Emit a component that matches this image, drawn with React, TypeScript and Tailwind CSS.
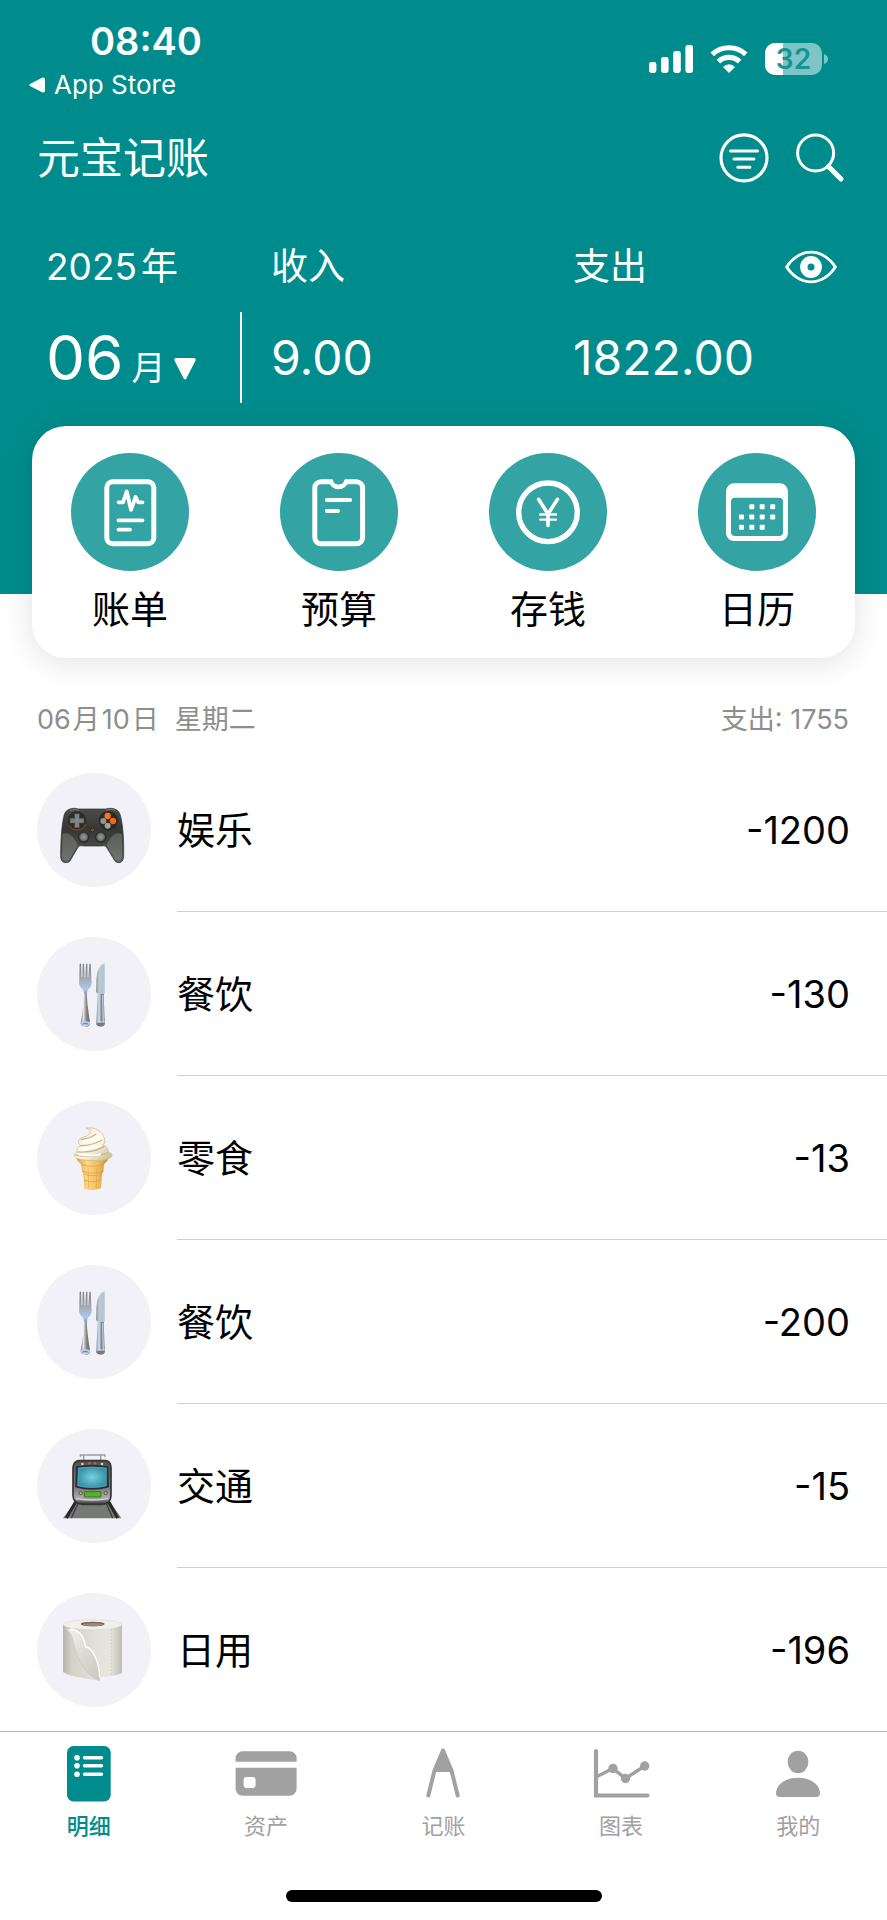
import type { ReactNode } from "react";

/* ---------- status bar ---------- */

function StatusIcons() {
  return (
    <div className="flex items-center">
      <svg width="44" height="28" viewBox="0 0 44 28" fill="#fff" aria-hidden="true">
        <rect x="0" y="17" width="7.4" height="11" rx="2.4" />
        <rect x="12" y="12" width="7.6" height="16" rx="2.4" />
        <rect x="24.2" y="6" width="7.6" height="22" rx="2.4" />
        <rect x="36.4" y="0" width="7.6" height="28" rx="2.4" />
      </svg>
      <svg className="ml-[17px]" width="38" height="28" viewBox="0 0 38 28" aria-hidden="true">
        <g fill="none" stroke="#fff" strokeWidth="5.2">
          <path d="M2.2 9.4 A24.5 24.5 0 0 1 35.8 9.4" />
          <path d="M8.4 16.6 A15.5 15.5 0 0 1 29.6 16.6" />
        </g>
        <path d="M19 28 L12.9 21.9 Q19 16.8 25.1 21.9 Z" fill="#fff" />
      </svg>
      <div className="relative ml-[17px] flex h-8 w-[57px] items-center justify-center overflow-hidden rounded-[10px] bg-[#80c5c5]">
        <span className="absolute inset-y-0 left-0 w-[18px] bg-white" />
        <span className="relative text-[28px] leading-8 font-semibold text-[#169393]">32</span>
      </div>
      <svg className="ml-[2px]" width="4" height="10" viewBox="0 0 4 10" aria-hidden="true">
        <path d="M0 0 Q4 1.5 4 5 T0 10 Z" fill="#80c5c5" />
      </svg>
    </div>
  );
}

/* ---------- header icons ---------- */

const FilterIcon = () => (
  <svg width="50" height="50" viewBox="0 0 50 50" fill="none" stroke="#fff" strokeLinecap="round" aria-hidden="true">
    <circle cx="25" cy="24.800" r="23" strokeWidth="3.2" />
    <path d="M11.5 18H38.500M15 26H35M18.800 34.300H31" strokeWidth="3" />
  </svg>
);

const SearchIcon = () => (
  <svg width="50" height="50" viewBox="0 0 50 50" fill="none" stroke="#fff" strokeLinecap="round" aria-hidden="true">
    <circle cx="20.6" cy="20" r="18" strokeWidth="3" />
    <path d="M33.5 33.5L46 46" strokeWidth="5" />
  </svg>
);

const EyeIcon = () => (
  <svg width="60" height="40" viewBox="0 0 60 40" fill="none" stroke="#fff" aria-hidden="true">
    <path
      d="M5.6 20C11 11.5 20 5.2 30 5.2S49 11.5 54.4 20C49 28.500 40 34.8 30 34.8S11 28.500 5.600 20Z"
      strokeWidth="2.8"
      strokeLinejoin="round"
    />
    <circle cx="30" cy="20" r="7.2" strokeWidth="7.4" />
  </svg>
);

/* ---------- shortcut icons ---------- */

const shortcuts: { label: string; icon: ReactNode }[] = [
  {
    label: "账单",
    icon: (
      <g fill="none" stroke="#fff" strokeLinecap="round" strokeLinejoin="round">
        <rect x="35.800" y="28.8" width="47" height="62" rx="6" strokeWidth="5" />
        <path d="M47.500 49.3H52L55.700 38.500L60 56.800L64.500 44L67.300 49.3H71.500" strokeWidth="3.8" />
        <path d="M47.500 67.300H71.500M47.500 76.700H59" strokeWidth="3.8" />
      </g>
    ),
  },
  {
    label: "预算",
    icon: (
      <g fill="none" stroke="#fff" strokeLinejoin="round">
        <path
          d="M52.600 28.800H41A6.200 6.200 0 0 0 34.800 35V84.600A6.200 6.200 0 0 0 41 90.800H76.400A6.200 6.200 0 0 0 82.600 84.600V35A6.200 6.200 0 0 0 76.400 28.800H64.600"
          strokeWidth="5"
        />
        <path d="M50.600 27.500A8.200 8.200 0 0 0 66.600 27.500" strokeWidth="4.600" />
        <path d="M46.800 47H70.200M46.800 58H58" strokeWidth="3.800" strokeLinecap="round" />
      </g>
    ),
  },
  {
    label: "存钱",
    icon: (
      <g fill="none" stroke="#fff" strokeLinecap="round" strokeLinejoin="round">
        <circle cx="59" cy="59.300" r="29.300" strokeWidth="5.400" />
        <path d="M49.600 46.300L59 61L68.500 46.300M59 61V72.500" strokeWidth="3.600" />
        <path d="M51.300 61.500H67M51.300 66.600H67" strokeWidth="2.400" />
      </g>
    ),
  },
  {
    label: "日历",
    icon: (
      <g fill="#fff">
        <path
          fillRule="evenodd"
          d="M36 30.300H82A8 8 0 0 1 90 38.300V80A8 8 0 0 1 82 88H36A8 8 0 0 1 28 80V38.300A8 8 0 0 1 36 30.300ZM37 44.700A4 4 0 0 0 33 48.700V79A4 4 0 0 0 37 83H81A4 4 0 0 0 85 79V48.700A4 4 0 0 0 81 44.700Z"
        />
        {[
          [53.800, 53.700], [64.200, 53.700], [74.700, 53.700],
          [43.500, 64], [53.800, 64], [64.200, 64], [74.700, 64],
          [43.500, 74.200], [53.800, 74.200], [64.200, 74.200],
        ].map(([x, y]) => (
          <rect key={`${x}-${y}`} x={x - 2.500} y={y - 2.500} width="5" height="5" rx="0.800" />
        ))}
      </g>
    ),
  },
];

/* ---------- category pictures ---------- */

function Picture({ children }: { children: ReactNode }) {
  return (
    <svg className="size-full" viewBox="0 0 342 342" aria-hidden="true">
      {children}
    </svg>
  );
}

const GamepadPicture = () => (
  <Picture>
    <defs>
      <linearGradient id="pad" x1="0" y1="0" x2="0" y2="1">
        <stop offset="0" stopColor="#4a4c4a" />
        <stop offset="0.400" stopColor="#353735" />
        <stop offset="1" stopColor="#5b5d5a" />
      </linearGradient>
      <linearGradient id="grip" x1="0" y1="0" x2="0" y2="1">
        <stop offset="0" stopColor="#5c5e5b" />
        <stop offset="1" stopColor="#70736f" />
      </linearGradient>
      <radialGradient id="stick">
        <stop offset="0" stopColor="#999c9a" />
        <stop offset="0.650" stopColor="#777a78" />
        <stop offset="1" stopColor="#414341" />
      </radialGradient>
    </defs>
    <path
      d="M84 119C94 105 112 104 124 108H206C220 104 238 105 247 119C256 138 261 190 260 245C260 263 254 269 245 269C236 269 233 264 229 256L208 222C203 216 198 219 191 219H141C133 219 128 216 123 223L103 257C99 266 95 269 87 269C77 269 71 263 71 248C71 190 76 138 84 119Z"
      fill="url(#pad)"
      stroke="#292b29"
      strokeWidth="2"
    />
    <path d="M76 185C86 175 105 185 113 200C121 211 124 216 119 223L98 257C94 265 78 266 76 252Z" fill="url(#grip)" />
    <path d="M255 185C245 175 226 185 218 200C210 211 207 216 212 223L233 257C238 265 253 266 255 252Z" fill="url(#grip)" />
    <path d="M99 112Q115 107 125 112M207 112Q225 106 235 113" fill="none" stroke="#7b7e7b" strokeWidth="3" />
    <circle cx="120" cy="143" r="28" fill="#2b2d2b" />
    <path d="M98 158A26 26 0 0 0 145 154" fill="none" stroke="#a64520" strokeWidth="3" />
    <path d="M113 122H127V136H141V150H127V164H113V150H99V136H113Z" fill="#7c807d" stroke="#454846" strokeWidth="1.500" />
    <path d="M114 123L120 142L126 123M100 149L120 143L140 149M114 163L120 144L126 163" fill="none" stroke="#8d918f" strokeWidth="1.500" />
    <circle cx="214" cy="143" r="29" fill="#292a29" />
    <circle cx="212" cy="129" r="9.500" fill="#ff7418" />
    <circle cx="228" cy="144" r="9.500" fill="#ff650e" />
    <circle cx="199" cy="144" r="9" fill="#929492" />
    <circle cx="212" cy="158" r="9" fill="#a0a2a0" />
    <circle cx="166" cy="171" r="7" fill="#20211f" />
    <circle cx="166" cy="171" r="4" fill="#873916" stroke="#df611e" strokeWidth="1.500" />
    <circle cx="140" cy="193" r="17" fill="#292b29" />
    <circle cx="140" cy="192" r="14" fill="url(#stick)" />
    <circle cx="191" cy="193" r="17" fill="#292b29" />
    <circle cx="191" cy="192" r="14" fill="url(#stick)" />
  </Picture>
);

const CutleryPicture = () => (
  <Picture>
    <defs>
      <linearGradient id="handle" x1="0" y1="0" x2="1" y2="0">
        <stop offset="0" stopColor="#777981" />
        <stop offset="0.300" stopColor="#e3e5eb" />
        <stop offset="0.600" stopColor="#8c8988" />
        <stop offset="1" stopColor="#5f5d60" />
      </linearGradient>
      <linearGradient id="blade" x1="0" y1="0" x2="1" y2="0">
        <stop offset="0" stopColor="#8e9da6" />
        <stop offset="0.400" stopColor="#becbd3" />
        <stop offset="1" stopColor="#a8bdc9" />
      </linearGradient>
      <linearGradient id="tines" x1="0" y1="0" x2="0" y2="1">
        <stop offset="0" stopColor="#77777b" />
        <stop offset="0.550" stopColor="#aab0ba" />
        <stop offset="0.800" stopColor="#a7c8ef" />
        <stop offset="1" stopColor="#8597af" />
      </linearGradient>
    </defs>
    <path
      d="M128 82Q130 77 132 82L134 121H136L137 82Q139 77 141 82L143 121H145L147 82Q149 77 151 82L152 121H154L157 82Q159 77 161 82L164 137Q163 151 152 158L149 174H142L139 158Q127 151 126 137Z"
      fill="url(#tines)"
    />
    <path d="M142 168H149Q151 208 159 257Q160 269 145 269Q130 269 131 257Q140 210 142 168Z" fill="url(#handle)" />
    <path d="M131 255Q145 250 159 255Q159 268 145 268Q131 268 131 255Z" fill="#b5d2f1" />
    <path d="M137 261Q145 258 153 261" fill="none" stroke="#68717d" strokeWidth="3" />
    <path d="M203 79Q180 85 178 127L177 166Q184 176 203 170L204 91Z" fill="url(#blade)" />
    <path d="M202 81L201 168" stroke="#d6e1e8" strokeWidth="2" />
    <path d="M182 171H200L203 260Q201 269 190 269Q178 269 178 259Z" fill="url(#handle)" />
    <path d="M186 174L184 255M197 174L199 256" stroke="#b8d1ed" strokeWidth="4" />
    <path d="M179 256H203L202 265Q190 272 179 265Z" fill="#7d7979" />
    <path d="M179 255H203" stroke="#d4e2f1" strokeWidth="3" />
  </Picture>
);

const IceCreamPicture = () => (
  <Picture>
    <defs>
      <linearGradient id="cone" x1="0" y1="0" x2="1" y2="0">
        <stop offset="0" stopColor="#d99b3d" />
        <stop offset="0.350" stopColor="#ffd783" />
        <stop offset="0.700" stopColor="#eeb956" />
        <stop offset="1" stopColor="#c88632" />
      </linearGradient>
      <linearGradient id="cream" x1="0" y1="0" x2="1" y2="1">
        <stop offset="0" stopColor="#eee5cd" />
        <stop offset="0.500" stopColor="#fffdf0" />
        <stop offset="1" stopColor="#c9b583" />
      </linearGradient>
    </defs>
    <path d="M116 163Q167 187 216 163Q216 178 201 190L199 213L195 219L192 262Q166 272 142 263L139 219L135 211L132 190Q119 180 116 163Z" fill="url(#cone)" />
    <path d="M132 190Q165 202 201 190M136 211Q167 222 198 211M139 219Q168 229 195 219M141 238Q168 247 193 238" fill="none" stroke="#d59a45" strokeWidth="2" />
    <path d="M153 199L155 263M180 199L178 263" stroke="#e0a750" strokeWidth="2" />
    <path
      d="M147 81Q188 76 202 110Q207 122 199 133Q214 136 214 155Q226 155 225 165Q215 181 168 179Q124 179 111 165Q110 158 121 154Q116 140 131 134Q119 123 129 113Q157 104 161 94Q160 84 147 81Z"
      fill="url(#cream)"
      stroke="#c8b68a"
      strokeWidth="2"
    />
    <path d="M131 116Q157 113 178 99M129 134Q166 134 195 117M122 153Q168 156 202 136M115 162Q171 172 215 154" fill="none" stroke="#c9b78a" strokeWidth="4" />
    <path d="M138 121Q166 122 185 103M134 143Q164 147 193 133M124 160Q163 167 192 160" fill="none" stroke="#fffef7" strokeWidth="5" />
  </Picture>
);

const TrainPicture = () => (
  <Picture>
    <defs>
      <linearGradient id="shell" x1="0" y1="0" x2="0" y2="1">
        <stop offset="0" stopColor="#515151" />
        <stop offset="0.600" stopColor="#777" />
        <stop offset="0.850" stopColor="#aaa" />
        <stop offset="1" stopColor="#333" />
      </linearGradient>
      <radialGradient id="glass">
        <stop offset="0" stopColor="#79d2dc" />
        <stop offset="1" stopColor="#3a93ab" />
      </radialGradient>
    </defs>
    <path d="M116 215H217L253 268H78Z" fill="#777976" />
    <path d="M117 217L88 267M214 217L242 267" stroke="#272827" strokeWidth="9" />
    <path d="M126 217L103 267M205 217L227 267" stroke="#3e403e" strokeWidth="4" />
    <path d="M130 84V78H204V84M140 79V96M191 79V96" fill="none" stroke="#9a9ba6" strokeWidth="4" />
    <path d="M125 95H206Q221 96 222 116V199Q222 225 196 226H137Q108 224 108 199V116Q110 96 125 95Z" fill="url(#shell)" stroke="#343535" strokeWidth="5" />
    <path d="M117 112Q166 103 214 112L216 175Q166 190 115 175Z" fill="#292d30" />
    <path d="M124 117Q166 111 208 117V170Q166 181 122 170Z" fill="url(#glass)" stroke="#4fc1d0" strokeWidth="2" />
    <rect x="142" y="188" width="50" height="16" rx="2" fill="#51b52c" stroke="#274c20" strokeWidth="2" />
    <circle cx="131" cy="192" r="5" fill="#c8ad81" stroke="#343535" strokeWidth="2" />
    <circle cx="206" cy="192" r="5" fill="#c8ad81" stroke="#343535" strokeWidth="2" />
    <circle cx="136" cy="105" r="4" fill="#e8cf9d" />
    <circle cx="195" cy="105" r="4" fill="#e8cf9d" />
    <circle cx="157" cy="103" r="4" fill="#ad675a" />
    <circle cx="174" cy="103" r="4" fill="#ad675a" />
    <path d="M116 209Q166 217 214 209" fill="none" stroke="#d8d8d8" strokeWidth="4" />
  </Picture>
);

const PaperRollPicture = () => (
  <Picture>
    <defs>
      <linearGradient id="roll" x1="0" y1="0" x2="1" y2="0">
        <stop offset="0" stopColor="#b6b4aa" />
        <stop offset="0.150" stopColor="#d3d2c9" />
        <stop offset="0.600" stopColor="#e4e3db" />
        <stop offset="0.800" stopColor="#e7e6de" />
        <stop offset="1" stopColor="#bdbcb3" />
      </linearGradient>
      <linearGradient id="sheet" x1="0" y1="0" x2="1" y2="1">
        <stop offset="0" stopColor="#f1f0eb" />
        <stop offset="0.500" stopColor="#dcdbd3" />
        <stop offset="1" stopColor="#c9c7bd" />
      </linearGradient>
    </defs>
    <path d="M78 94V237Q99 250 133 254L188 264V251Q232 252 255 240V94Z" fill="url(#roll)" />
    <ellipse cx="166.500" cy="95" rx="88" ry="15" fill="#f1f0eb" stroke="#d4d2c9" strokeWidth="1.500" />
    <ellipse cx="167" cy="93" rx="36" ry="7" fill="#726559" />
    <ellipse cx="168" cy="95" rx="31" ry="5" fill="#9c8877" />
    <path
      d="M88 109Q121 105 137 132Q143 144 145 161Q158 159 175 191Q188 220 188 263Q158 252 138 222Q116 188 108 145Q102 118 88 109Z"
      fill="url(#sheet)"
    />
    <path d="M89 109Q103 118 109 145Q117 188 139 222Q158 250 187 262" fill="none" stroke="#bfbdb2" strokeWidth="1.500" />
    <path d="M100 108Q125 110 138 133Q143 145 146 163Q159 161 174 190Q186 217 188 252" fill="none" stroke="#fff" strokeWidth="4" />
    <path d="M223 109V246" stroke="#c4c2b8" strokeWidth="2" strokeDasharray="5 5" />
  </Picture>
);

const records: { name: string; amount: string; Art: () => ReactNode }[] = [
  { name: "娱乐", amount: "-1200", Art: GamepadPicture },
  { name: "餐饮", amount: "-130", Art: CutleryPicture },
  { name: "零食", amount: "-13", Art: IceCreamPicture },
  { name: "餐饮", amount: "-200", Art: CutleryPicture },
  { name: "交通", amount: "-15", Art: TrainPicture },
  { name: "日用", amount: "-196", Art: PaperRollPicture },
];

/* ---------- tab bar ---------- */

const tabs: { label: string; active?: boolean; icon: ReactNode }[] = [
  {
    label: "明细",
    active: true,
    icon: (
      <>
        <rect x="10" y="3" width="43.700" height="55.500" rx="6.500" fill="currentColor" />
        <g fill="#fff">
          <circle cx="20" cy="14.800" r="2.800" />
          <circle cx="20" cy="22.800" r="2.800" />
          <circle cx="20" cy="31.200" r="2.800" />
        </g>
        <path d="M27.500 14.800H44.500M27.500 22.800H44.500M27.500 31.200H44.500" stroke="#fff" strokeWidth="3.400" strokeLinecap="round" />
      </>
    ),
  },
  {
    label: "资产",
    icon: (
      <path
        fill="currentColor"
        fillRule="evenodd"
        d="M8.600 8.300H55.600A7 7 0 0 1 62.600 15.300V18.700H1.600V15.300A7 7 0 0 1 8.600 8.300ZM1.600 24.700H62.600V45.700A7 7 0 0 1 55.600 52.700H8.600A7 7 0 0 1 1.600 45.700ZM12.600 34A3 3 0 0 0 9.600 37V42A3 3 0 0 0 12.600 45H18.600A3 3 0 0 0 21.600 42V37A3 3 0 0 0 18.600 34Z"
      />
    ),
  },
  {
    label: "记账",
    icon: (
      <>
        <path d="M30.500 7Q32 5 33.500 7L41 29H23Z" fill="currentColor" />
        <path d="M32 7.500L23.500 27.500L17.300 52.500M32 7.500L40.500 27.500L46.700 52.500" fill="none" stroke="currentColor" strokeWidth="4" strokeLinecap="round" strokeLinejoin="round" />
      </>
    ),
  },
  {
    label: "图表",
    icon: (
      <>
        <path d="M7 8.200V52.500H58.500" fill="none" stroke="currentColor" strokeWidth="4.200" strokeLinecap="round" />
        <path d="M8 33.500L24 25.500L36.500 35.500L55.700 23" fill="none" stroke="currentColor" strokeWidth="3.400" />
        <g fill="currentColor">
          <circle cx="24" cy="25.500" r="4.700" />
          <circle cx="36.500" cy="35.500" r="4.700" />
          <circle cx="55.700" cy="23" r="4.700" />
        </g>
      </>
    ),
  },
  {
    label: "我的",
    icon: (
      <g fill="currentColor">
        <ellipse cx="32" cy="19" rx="10.400" ry="11.300" />
        <path d="M10 50C10 42 19 34.700 32 34.700S54 42 54 50Q54 54 50 54H14Q10 54 10 50Z" />
      </g>
    ),
  },
];

export default function App() {
  return (
    <div className="flex min-h-screen flex-col bg-white font-[family-name:Inter,'Noto_Sans_CJK_SC',sans-serif] text-black">
      <header className="bg-[#008c8c] pb-[191px] text-white">
        <div className="flex items-start justify-between pt-[21px] pr-[59px] pl-[29px]">
          <div>
            <p className="pl-[61px] text-[38px] leading-10 font-semibold">08:40</p>
            <a href="#app-store" className="flex items-center gap-[9px] text-[26px] leading-[48px]">
              <svg width="16" height="16" viewBox="0 0 16 16" fill="#fff" aria-hidden="true">
                <path d="M1 6.900L13.500 0.600Q16 0 16 2.500V13.500Q16 16 13.500 15.400L1 9.100Q-0.500 8 1 6.900Z" />
              </svg>
              App Store
            </a>
          </div>
          <div className="pt-[22px]">
            <StatusIcons />
          </div>
        </div>

        <div className="flex h-[98px] items-center justify-between pr-[42px] pl-[37px]">
          <h1 className="text-[43px] leading-[60px]">元宝记账</h1>
          <div className="flex gap-[26px]">
            <button type="button" aria-label="筛选">
              <FilterIcon />
            </button>
            <button type="button" aria-label="搜索">
              <SearchIcon />
            </button>
          </div>
        </div>

        <div className="mt-10 grid grid-cols-[196fr_331fr_268fr] gap-y-[25px] px-[46px] text-[37px] leading-10">
          <p className="flex items-baseline gap-1">
            <span>2025</span>
            <span>年</span>
          </p>
          <p className="pl-[29px]">收入</p>
          <div className="flex items-center justify-between">
            <p>支出</p>
            <button type="button" aria-label="显示金额">
              <EyeIcon />
            </button>
          </div>
          <div className="flex h-[91px] items-center border-r-2 border-white pt-[10px]">
            <button type="button" className="flex items-baseline">
              <span className="text-[62px] leading-[72px]">06</span>
              <span className="ml-2 text-[34px] leading-[72px]">月</span>
              <svg className="ml-2" width="22" height="22" viewBox="0 0 22 22" fill="#fff" aria-hidden="true">
                <path d="M2 0H20Q22.500 0.500 21.300 3L12.300 20.500Q11 22.500 9.700 20.500L0.700 3Q-0.500 0.500 2 0Z" />
              </svg>
            </button>
          </div>
          <p className="self-center pl-[29px] text-[48px] leading-[60px]">9.00</p>
          <p className="self-center text-[48px] leading-[60px]">1822.00</p>
        </div>
      </header>

      <main className="flex-1">
        <nav className="relative mx-8 -mt-[168px] flex justify-between rounded-[34px] bg-white px-[39px] pt-[27px] pb-[21px] shadow-[0_4px_32px_rgba(0,0,0,0.12)]">
          {shortcuts.map(({ label, icon }) => (
            <a key={label} href={`#${label}`} className="flex flex-col items-center gap-[10px]">
              <svg className="rounded-full bg-[#33a3a3]" width="118" height="118" viewBox="0 0 118 118" aria-hidden="true">
                {icon}
              </svg>
              <span className="text-[38px] leading-[56px]">{label}</span>
            </a>
          ))}
        </nav>

        <section>
          <div className="flex items-center justify-between pt-[43px] pr-[38px] pb-[9px] pl-[37px] text-[27px] leading-[38px] text-[#8e8e8e]">
            <h2 className="flex gap-4">
              <span className="flex items-baseline gap-[2px]">
                <span>06</span>
                <span>月</span>
                <span>10</span>
                <span>日</span>
              </span>
              <span>星期二</span>
            </h2>
            <p>支出: 1755</p>
          </div>
          <ul>
            {records.map(({ name, amount, Art }, index) => (
              <li key={index} className="flex items-center pl-[37px]">
                <span className="size-[114px] shrink-0 rounded-full bg-[#f2f1f8]">
                  <Art />
                </span>
                <div className="ml-[26px] flex h-[164px] flex-1 items-center justify-between border-b border-[#cfcfcf] pt-px pr-[37px] text-[38px] leading-[56px]">
                  <span>{name}</span>
                  <span>{amount}</span>
                </div>
              </li>
            ))}
          </ul>
        </section>
      </main>

      <footer className="sticky bottom-0 -mt-px border-t border-[#b2b2b2] bg-white pt-[11px] pb-[18px]">
        <nav className="grid grid-cols-5">
          {tabs.map(({ label, active, icon }) => (
            <a
              key={label}
              href={`#${label}`}
              aria-current={active ? "page" : undefined}
              className={`flex flex-col items-center gap-[9px] ${active ? "font-medium text-[#008c8c]" : "text-[#a1a1a1]"}`}
            >
              <svg width="64" height="60" viewBox="0 0 64 60" aria-hidden="true">
                {icon}
              </svg>
              <span className="text-[22px] leading-7">{label}</span>
            </a>
          ))}
        </nav>
        <div className="mx-auto mt-[50px] h-3 w-[316px] rounded-full bg-black" />
      </footer>
    </div>
  );
}
